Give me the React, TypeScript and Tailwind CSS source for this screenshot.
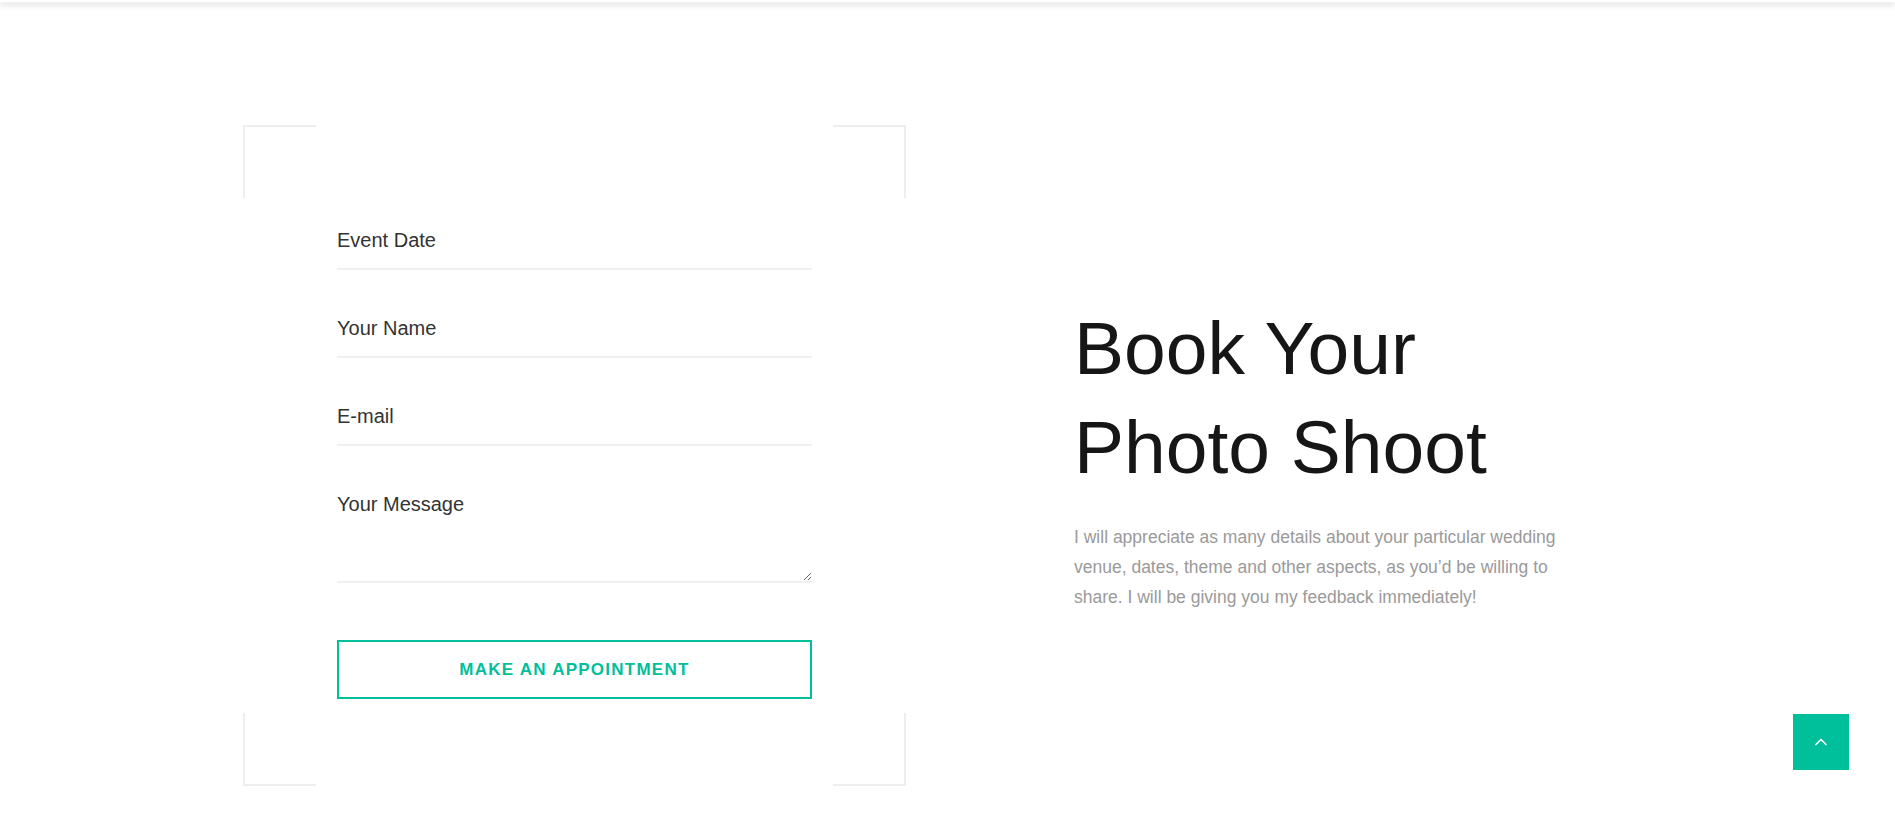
import { ChevronUp } from 'lucide-react';

const fields = ['Event Date', 'Your Name', 'E-mail'];

export default function App() {
  return (
    <div className="min-h-screen bg-white font-['Liberation_Sans',Arial,sans-serif]">
      {/* header edge */}
      <div className="h-[2px] bg-white shadow-[0_2px_6px_rgba(0,0,0,0.28)]" />

      {/* Booking Section */}
      <section className="flex items-center gap-[168px] pl-[243px] pt-[123px] pb-[28px]">
        <div className="relative w-[663px] shrink-0">
          <div className="absolute left-0 top-0 w-[73px] h-[73px] border-l-2 border-t-2 border-[#eeeeee]" />
          <div className="absolute right-0 top-0 w-[73px] h-[73px] border-r-2 border-t-2 border-[#eeeeee]" />
          <div className="absolute left-0 bottom-0 w-[73px] h-[73px] border-l-2 border-b-2 border-[#eeeeee]" />
          <div className="absolute right-0 bottom-0 w-[73px] h-[73px] border-r-2 border-b-2 border-[#eeeeee]" />

          <form className="relative flex flex-col px-[94px] pt-[88px] pb-[87px]">
            {fields.map((f) => (
              <input
                key={f}
                type="text"
                placeholder={f}
                className="h-[57px] mb-[31px] border-b-2 border-[#f0f0f0] bg-transparent text-[20px] text-[#333] placeholder:text-[#333] outline-none"
              />
            ))}
            <textarea
              placeholder="Your Message"
              className="h-[106px] pt-[16px] border-b-2 border-[#f0f0f0] bg-transparent text-[20px] leading-[23px] text-[#333] placeholder:text-[#333] outline-none"
            />
            <button
              type="button"
              className="mt-[57px] h-[59px] border-2 border-[#00bf9b] text-[#00bf9b] text-[17px] font-bold uppercase tracking-[1.25px]"
            >
              Make an Appointment
            </button>
          </form>
        </div>

        <div className="w-[500px]">
          <h2 className="text-[75px] leading-[98.7px] text-[#161616] font-normal">
            Book Your
            <br />
            Photo Shoot
          </h2>
          <p className="mt-[25px] text-[17.5px] leading-[30px] text-[#9a9a9a]">
            I will appreciate as many details about your particular wedding
            venue, dates, theme and other aspects, as you’d be willing to
            share. I will be giving you my feedback immediately!
          </p>
        </div>
      </section>

      <button
        type="button"
        className="fixed right-[46px] bottom-[44px] w-14 h-14 bg-[#00bf9b] flex items-center justify-center text-white"
      >
        <ChevronUp size={20} strokeWidth={2} />
      </button>
    </div>
  );
}
